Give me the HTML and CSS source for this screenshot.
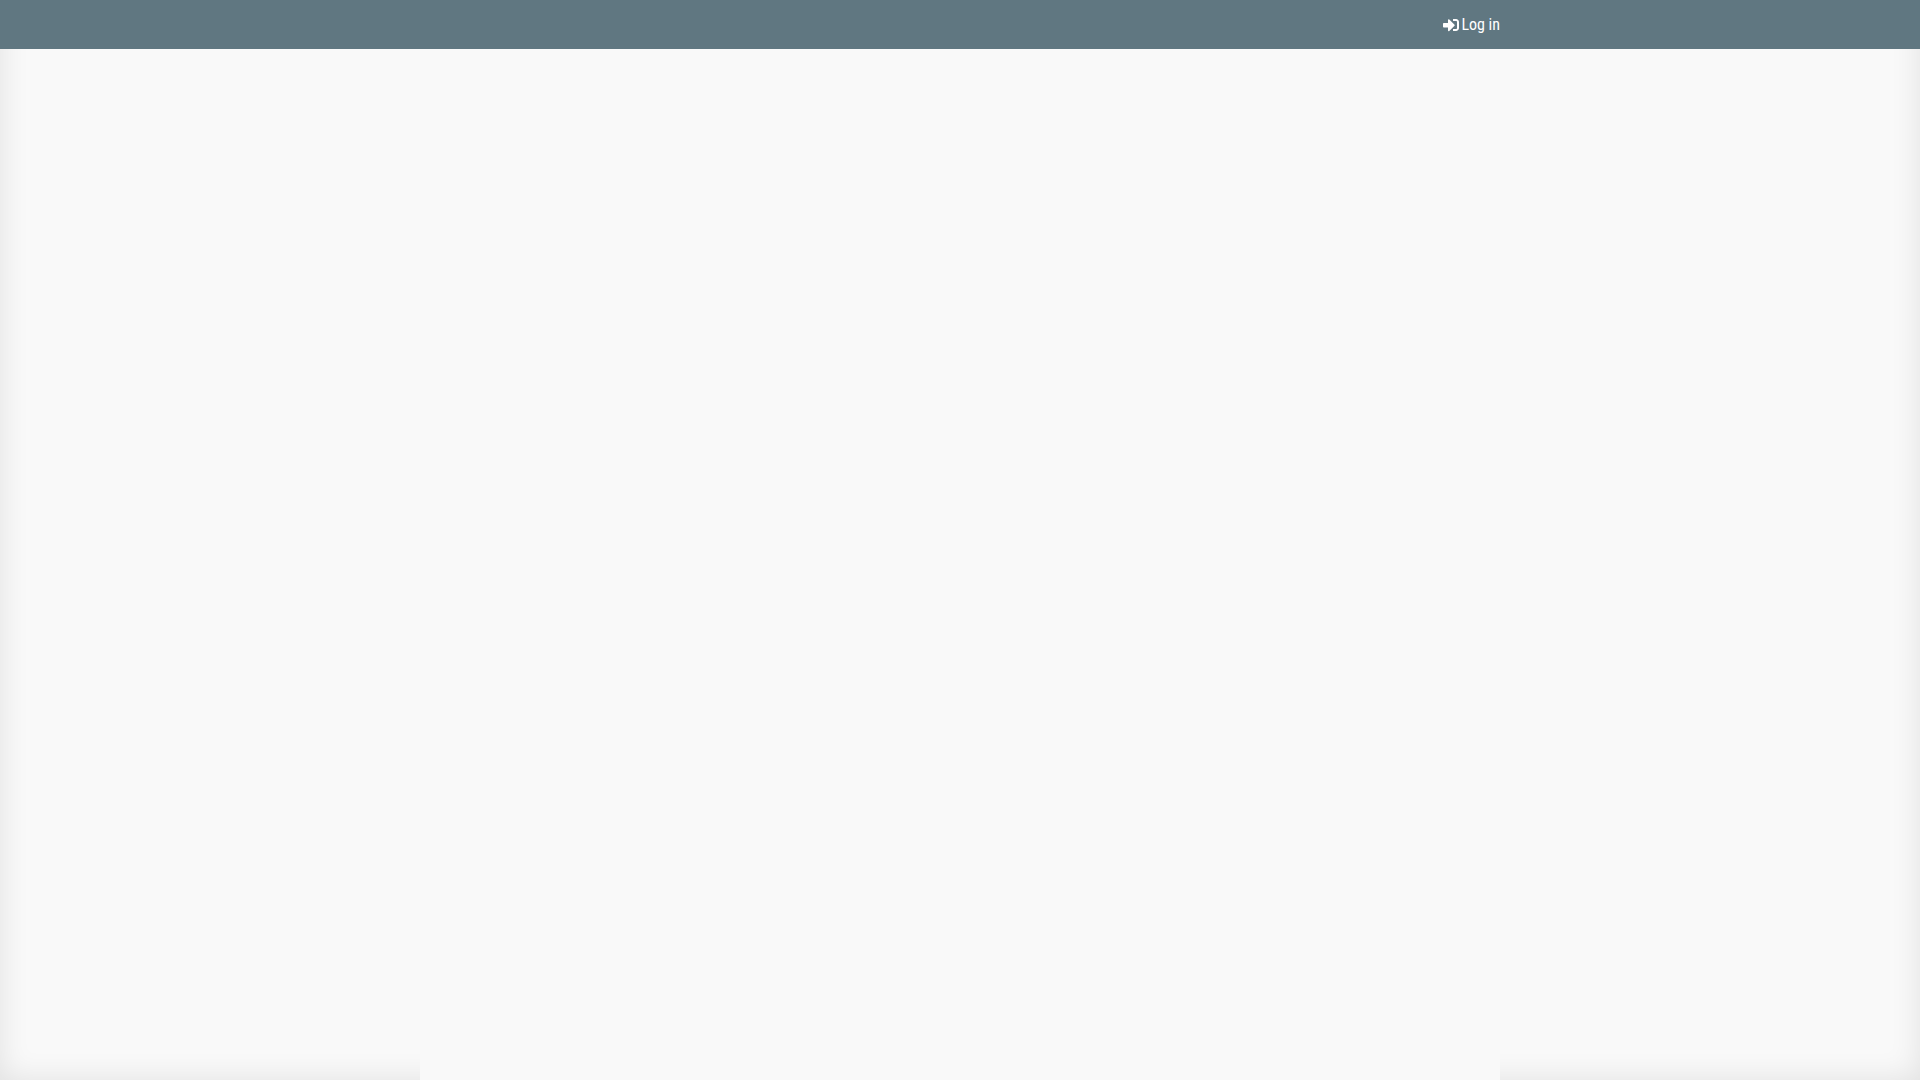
FILE: index.html
```html
<!DOCTYPE html>
<html lang="en">

<head>
    <meta charset="utf-8">
    <title>Log in</title>
    <link rel="stylesheet" href="styles.css">
</head>

<body>
    <header class="topbar">
        <nav class="container">
            <a class="login" href="#login">
                <svg class="icon" viewBox="0 0 512 512" aria-hidden="true">
                    <path d="M416 448h-84c-6.600 0-12-5.400-12-12v-40c0-6.600 5.400-12 12-12h84c17.700 0 32-14.300 32-32V160c0-17.700-14.300-32-32-32h-84c-6.600 0-12-5.400-12-12V76c0-6.600 5.400-12 12-12h84c53 0 96 43 96 96v192c0 53-43 96-96 96zm-47-201L201 79c-15-15-41-4.500-41 17v96H24c-13.300 0-24 10.700-24 24v96c0 13.300 10.700 24 24 24h136v96c0 21.500 26 32 41 17l168-168c9.300-9.400 9.300-24.600 0-34z"/>
                </svg>
                Log in
            </a>
        </nav>
    </header>
    <main class="container content"></main>
</body>

</html>
```
FILE: styles.css
```css
* {
    box-sizing: border-box;
}

body {
    margin: 0;
    min-height: 100vh;
    display: flex;
    flex-direction: column;
    font-family: "Roboto Condensed", Roboto, sans-serif;
    font-size: 16px;
    background-color: #f9f9f9;
    box-shadow: inset 0 0 30px rgba(0, 0, 0, 0.1);
}

.container {
    width: 100%;
    max-width: 1080px;
    margin: 0 auto;
}

.topbar {
    background-color: #607781;
    color: #fff;
}

.topbar .container {
    display: flex;
    justify-content: flex-end;
}

.login {
    display: flex;
    align-items: center;
    gap: 2px;
    height: 49px;
    color: #fff;
    text-decoration: none;
}

.icon {
    width: 16px;
    height: 16px;
    fill: currentColor;
}

.content {
    flex: 1;
    background-color: #f9f9f9;
}
```
